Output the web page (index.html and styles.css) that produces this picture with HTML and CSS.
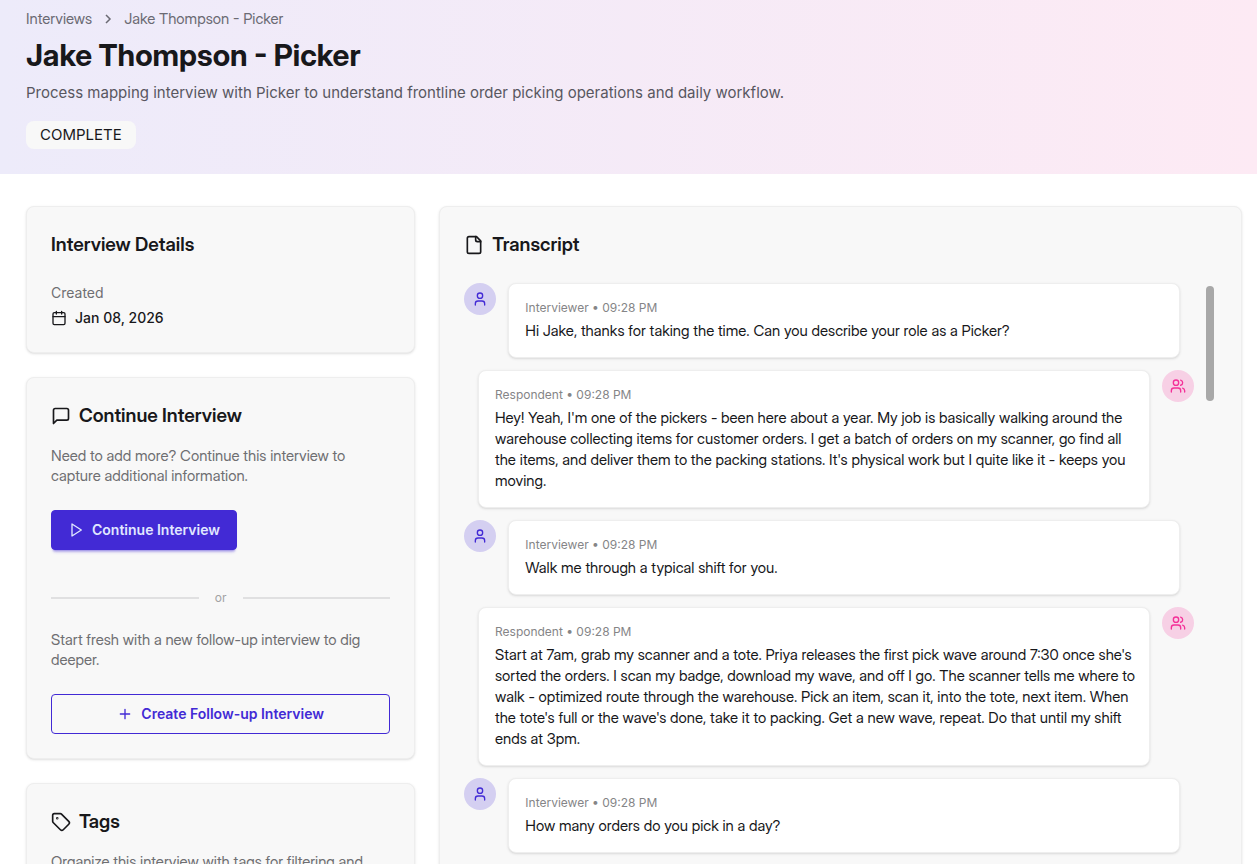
FILE: index.html
```html
<!DOCTYPE html>
<html lang="en">
  <head>
    <meta charset="utf-8" />
    <title>Jake Thompson - Picker</title>
    <meta name="viewport" content="width=device-width, initial-scale=1.0" />
    <link rel="stylesheet" href="styles.css">
  </head>
  <body>
    <!-- shared icons -->
    <svg class="sprite" aria-hidden="true">
      <symbol id="user" viewBox="0 0 24 24">
        <path d="M19 21v-2a4 4 0 0 0-4-4H9a4 4 0 0 0-4 4v2" />
        <circle cx="12" cy="7" r="4" />
      </symbol>
      <symbol id="users" viewBox="0 0 24 24">
        <path d="M16 21v-2a4 4 0 0 0-4-4H6a4 4 0 0 0-4 4v2" />
        <circle cx="9" cy="7" r="4" />
        <path d="M22 21v-2a4 4 0 0 0-3-3.87" />
        <path d="M16 3.13a4 4 0 0 1 0 7.75" />
      </symbol>
    </svg>

    <header class="hero">
      <nav class="breadcrumbs" aria-label="Breadcrumb">
        <a href="#">Interviews</a>
        <svg class="chevron" viewBox="0 0 8 12"><path d="M2 2l4 4-4 4" /></svg>
        <span>Jake Thompson - Picker</span>
      </nav>
      <h1>Jake Thompson - Picker</h1>
      <p class="description">Process mapping interview with Picker to understand frontline order picking operations and daily workflow.</p>
      <span class="badge">COMPLETE</span>
    </header>

    <main class="content">
      <div class="sidebar">
        <section class="card">
          <h2>Interview Details</h2>
          <dl class="details">
            <dt>Created</dt>
            <dd>
              <svg class="icon icon-sm" viewBox="0 0 24 24"><path d="M8 2v4M16 2v4M3 10h18" /><rect x="3" y="4" width="18" height="18" rx="2" /></svg>
              Jan 08, 2026
            </dd>
          </dl>
        </section>

        <section class="card">
          <h2>
            <svg class="icon" viewBox="0 0 24 24"><path d="M21 15a2 2 0 0 1-2 2H7l-4 4V5a2 2 0 0 1 2-2h14a2 2 0 0 1 2 2z" /></svg>
            Continue Interview
          </h2>
          <p class="hint">Need to add more? Continue this interview to capture additional information.</p>
          <button class="btn btn-primary" type="button">
            <svg class="icon icon-sm" viewBox="0 0 24 24"><path d="M6 3l14 9-14 9z" /></svg>
            Continue Interview
          </button>
          <div class="divider">or</div>
          <p class="hint">Start fresh with a new follow-up interview to dig deeper.</p>
          <button class="btn btn-outline" type="button">
            <svg class="icon icon-sm" viewBox="0 0 24 24"><path d="M5 12h14M12 5v14" /></svg>
            Create Follow-up Interview
          </button>
        </section>

        <section class="card">
          <h2>
            <svg class="icon" viewBox="0 0 24 24"><path d="M12.586 2.586A2 2 0 0 0 11.172 2H4a2 2 0 0 0-2 2v7.172a2 2 0 0 0 .586 1.414l8.704 8.704a2.426 2.426 0 0 0 3.42 0l6.58-6.58a2.426 2.426 0 0 0 0-3.42z" /><circle cx="7.5" cy="7.5" r=".5" /></svg>
            Tags
          </h2>
          <p class="hint">Organize this interview with tags for filtering and</p>
        </section>
      </div>

      <section class="card transcript">
        <h2>
          <svg class="icon" viewBox="0 0 24 24"><path d="M15 2H6a2 2 0 0 0-2 2v16a2 2 0 0 0 2 2h12a2 2 0 0 0 2-2V7z" /><path d="M14 2v4a2 2 0 0 0 2 2h4" /></svg>
          Transcript
        </h2>
        <div class="scroller">
          <div class="messages">
            <article class="message">
              <div class="avatar"><svg class="icon icon-sm"><use href="#user" /></svg></div>
              <div class="bubble">
                <div class="meta">Interviewer • 09:28 PM</div>
                <p>Hi Jake, thanks for taking the time. Can you describe your role as a Picker?</p>
              </div>
            </article>
            <article class="message respondent">
              <div class="avatar"><svg class="icon icon-sm"><use href="#users" /></svg></div>
              <div class="bubble">
                <div class="meta">Respondent • 09:28 PM</div>
                <p>Hey! Yeah, I'm one of the pickers - been here about a year. My job is basically walking around the warehouse collecting items for customer orders. I get a batch of orders on my scanner, go find all the items, and deliver them to the packing stations. It's physical work but I quite like it - keeps you moving.</p>
              </div>
            </article>
            <article class="message">
              <div class="avatar"><svg class="icon icon-sm"><use href="#user" /></svg></div>
              <div class="bubble">
                <div class="meta">Interviewer • 09:28 PM</div>
                <p>Walk me through a typical shift for you.</p>
              </div>
            </article>
            <article class="message respondent">
              <div class="avatar"><svg class="icon icon-sm"><use href="#users" /></svg></div>
              <div class="bubble">
                <div class="meta">Respondent • 09:28 PM</div>
                <p>Start at 7am, grab my scanner and a tote. Priya releases the first pick wave around 7:30 once she's sorted the orders. I scan my badge, download my wave, and off I go. The scanner tells me where to walk - optimized route through the warehouse. Pick an item, scan it, into the tote, next item. When the tote's full or the wave's done, take it to packing. Get a new wave, repeat. Do that until my shift ends at 3pm.</p>
              </div>
            </article>
            <article class="message">
              <div class="avatar"><svg class="icon icon-sm"><use href="#user" /></svg></div>
              <div class="bubble">
                <div class="meta">Interviewer • 09:28 PM</div>
                <p>How many orders do you pick in a day?</p>
              </div>
            </article>
          </div>
          <div class="track"><div class="thumb"></div></div>
        </div>
      </section>
    </main>
  </body>
</html>
```
FILE: styles.css
```css
:root {
  --text: #18181b;
  --muted: #6f6f72;
  --primary: #422ad5;
  --secondary: #f43098;
  --base: #f8f8f8;
  --border: #eeeeee;
  --display: "Inter Display", Inter, "Liberation Sans", sans-serif;
}

* {
  box-sizing: border-box;
}

body {
  margin: 0;
  height: 100vh;
  overflow: hidden;
  background: white;
  color: var(--text);
  font-family: Inter, "Liberation Sans", sans-serif;
  font-size: 14px;
  line-height: 20px;
}

h1, h2, p, dl, dd {
  margin: 0;
}

.sprite {
  display: none;
}

.icon {
  width: 20px;
  height: 20px;
  flex: none;
  fill: none;
  stroke: currentColor;
  stroke-width: 2;
  stroke-linecap: round;
  stroke-linejoin: round;
}

.icon-sm {
  width: 16px;
  height: 16px;
}

/* header */
.hero {
  padding: 9px 26px 25px;
  background: linear-gradient(to right, #edebfa, #fdeaf4);
}

.breadcrumbs {
  display: flex;
  align-items: center;
  gap: 12px;
  color: #6b6a73;
  font-family: var(--display);
  font-size: 15px;
}

.breadcrumbs a {
  color: inherit;
  text-decoration: none;
}

.chevron {
  width: 8px;
  height: 12px;
  fill: none;
  stroke: currentColor;
  stroke-width: 1.5;
}

h1 {
  margin-top: 8px;
  font-family: var(--display);
  font-size: 30px;
  line-height: 36px;
  font-weight: 700;
}

.description {
  margin-top: 8px;
  font-size: 15px;
  line-height: 24px;
  color: #58575f;
}

.badge {
  display: inline-block;
  margin-top: 16px;
  padding: 2px 14px;
  border-radius: 8px;
  background: var(--base);
  font-size: 15px;
  line-height: 24px;
}

/* layout */
.content {
  display: grid;
  grid-template-columns: repeat(3, minmax(0, 1fr));
  align-items: start;
  gap: 24px;
  padding: 32px 15px 32px 26px;
}

.sidebar {
  display: grid;
  gap: 24px;
}

.card {
  padding: 24px;
  border: 1px solid var(--border);
  border-radius: 8px;
  background: var(--base);
  box-shadow: 0 1px 3px rgba(0, 0, 0, 0.1), 0 1px 2px -1px rgba(0, 0, 0, 0.1);
}

h2 {
  display: flex;
  align-items: center;
  gap: 8px;
  font-family: var(--display);
  font-size: 19px;
  line-height: 28px;
  font-weight: 600;
}

.details {
  margin-top: 24px;
}

.details dt {
  color: var(--muted);
}

.details dd {
  display: flex;
  align-items: center;
  gap: 8px;
  margin-top: 5px;
  font-weight: 500;
}

.hint {
  margin: 16px 0 24px;
  color: var(--muted);
  font-family: var(--display);
  font-size: 15px;
}

.btn {
  display: flex;
  align-items: center;
  justify-content: center;
  gap: 8px;
  height: 40px;
  padding: 0 16px;
  border: 1px solid var(--primary);
  border-radius: 4px;
  font: inherit;
  font-weight: 600;
  cursor: pointer;
}

.btn-primary {
  background: var(--primary);
  color: #e0e7ff;
  box-shadow: 0 3px 2px -2px rgba(66, 42, 213, 0.3), 0 4px 3px -2px rgba(66, 42, 213, 0.3);
}

.btn-outline {
  width: 100%;
  background: transparent;
  color: var(--primary);
}

.divider {
  display: flex;
  align-items: center;
  gap: 16px;
  margin: 40px 0 24px;
  color: #a2a2a4;
  font-size: 12px;
  line-height: 16px;
}

.divider::before,
.divider::after {
  content: "";
  flex: 1;
  height: 2px;
  background: #e0e0e1;
}

.divider + .hint {
  margin-top: 0;
}

/* transcript */
.transcript {
  grid-column: span 2;
}

.scroller {
  display: flex;
  gap: 12px;
  margin-top: 24px;
}

.messages {
  display: grid;
  flex: 1;
  gap: 12px;
}

.message {
  display: flex;
  gap: 12px;
}

.respondent {
  flex-direction: row-reverse;
}

.avatar {
  display: flex;
  align-items: center;
  justify-content: center;
  flex: none;
  width: 32px;
  height: 32px;
  border-radius: 50%;
  background: #d4cff1;
  color: var(--primary);
}

.respondent .avatar {
  background: #f7d0e5;
  color: var(--secondary);
}

.bubble {
  flex: 1;
  max-width: 672px;
  padding: 16px 10px 16px 16px;
  border: 1px solid var(--border);
  border-radius: 8px;
  background: white;
  box-shadow: 0 1px 3px rgba(0, 0, 0, 0.1), 0 1px 2px -1px rgba(0, 0, 0, 0.1);
}

.bubble p {
  font-family: var(--display);
  font-size: 15px;
  line-height: 21px;
}

.meta {
  margin-bottom: 4px;
  color: #858587;
  font-size: 12px;
  line-height: 16px;
}

.track {
  width: 11px;
  padding-top: 3px;
}

.thumb {
  width: 8px;
  height: 115px;
  border-radius: 4px;
  background: #a8a8a8;
}
```
